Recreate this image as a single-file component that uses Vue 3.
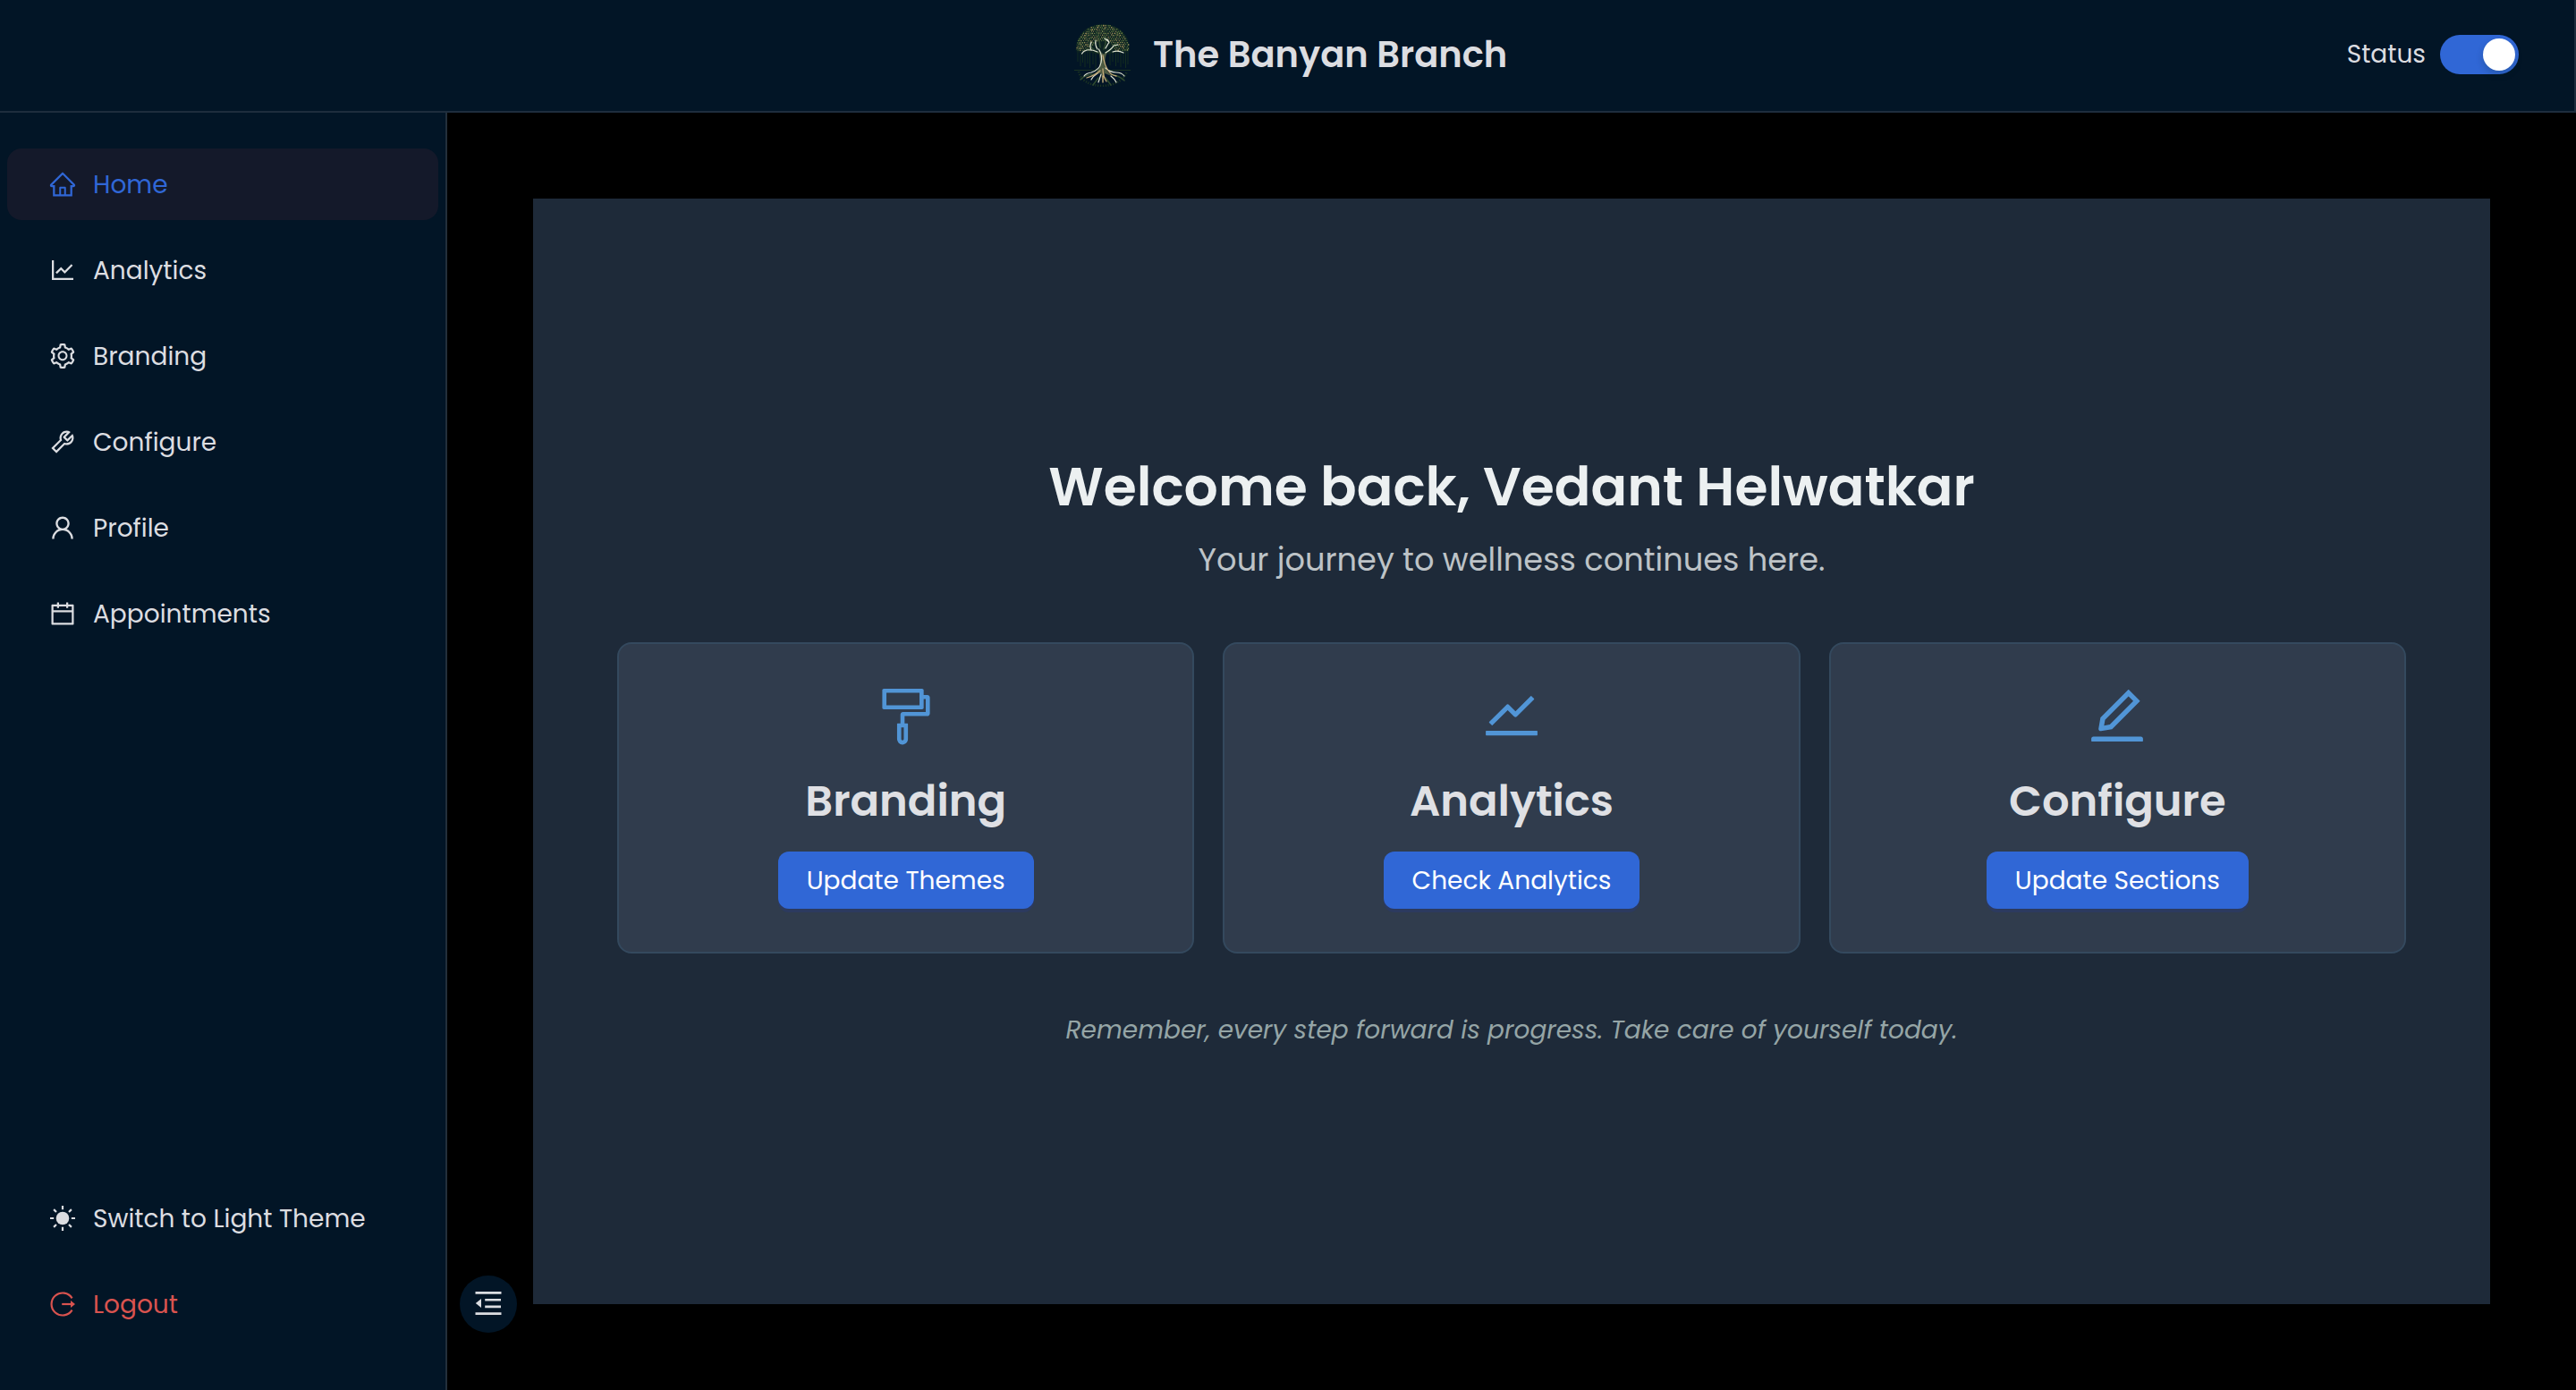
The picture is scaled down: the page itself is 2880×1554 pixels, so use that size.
<script setup>
import { ref } from 'vue'

const active = ref('Home')
const statusOn = ref(true)

const navItems = [
  {
    label: 'Home',
    path: 'M946.5 505L560.1 118.8l-25.9-25.9a31.5 31.5 0 00-44.4 0L77.5 505a63.9 63.9 0 00-18.8 46c.4 35.2 29.7 63.3 64.9 63.3h42.5V940h691.8V614.3h43.4c17.1 0 33.2-6.7 45.3-18.8a63.6 63.6 0 0018.7-45.3c0-17-6.7-33.1-18.8-45.2zM568 868H456V664h112v204zm217.9-325.7V868H632V640c0-22.1-17.9-40-40-40H432c-22.1 0-40 17.9-40 40v228H238.1V542.3h-96l370-369.7 23.1 23.1L882 542.3h-96.1z'
  },
  {
    label: 'Analytics',
    path: 'M888 792H200V168c0-4.4-3.6-8-8-8h-56c-4.4 0-8 3.6-8 8v688c0 4.4 3.6 8 8 8h752c4.4 0 8-3.6 8-8v-56c0-4.4-3.6-8-8-8zM305.8 637.7c3.1 3.1 8.1 3.1 11.3 0l138.3-137.6L583 628.5c3.1 3.1 8.2 3.1 11.3 0l275.4-275.3c3.1-3.1 3.1-8.2 0-11.3l-39.6-39.6a8.03 8.03 0 00-11.3 0l-230 229.9L461.4 404a8.03 8.03 0 00-11.3 0L266.3 586.7a8.03 8.03 0 000 11.3l39.5 39.7z'
  },
  {
    label: 'Branding',
    path: 'M924.8 625.7l-65.5-56c3.1-19 4.7-38.4 4.7-57.8s-1.6-38.8-4.7-57.8l65.5-56a32.03 32.03 0 009.3-35.2l-.9-2.6a443.74 443.74 0 00-79.7-137.9l-1.8-2.1a32.12 32.12 0 00-35.1-9.5l-81.3 28.9c-30-24.6-63.5-44-99.7-57.6l-15.7-85a32.05 32.05 0 00-25.8-25.7l-2.7-.5c-52.1-9.4-106.9-9.4-159 0l-2.7.5a32.05 32.05 0 00-25.8 25.7l-15.8 85.4a351.86 351.86 0 00-99 57.4l-81.9-29.1a32 32 0 00-35.1 9.5l-1.8 2.1a446.02 446.02 0 00-79.7 137.9l-.9 2.6c-4.5 12.5-.8 26.5 9.3 35.2l66.3 56.6c-3.1 18.8-4.6 38-4.6 57.1 0 19.2 1.5 38.4 4.6 57.1L99 625.5a32.03 32.03 0 00-9.3 35.2l.9 2.6c18.1 50.4 44.9 96.9 79.7 137.9l1.8 2.1a32.12 32.12 0 0035.1 9.5l81.9-29.1c29.8 24.5 63.1 43.9 99 57.4l15.8 85.4a32.05 32.05 0 0025.8 25.7l2.7.5a449.4 449.4 0 00159 0l2.7-.5a32.05 32.05 0 0025.8-25.7l15.7-85a350 350 0 0099.7-57.6l81.3 28.9a32 32 0 0035.1-9.5l1.8-2.1c34.8-41.1 61.6-87.5 79.7-137.9l.9-2.6c4.5-12.3.8-26.3-9.3-35zM788.3 465.9c2.5 15.1 3.8 30.6 3.8 46.1s-1.3 31-3.8 46.1l-6.6 40.1 74.7 63.9a370.03 370.03 0 01-42.6 73.6L721 702.8l-31.4 25.8c-23.9 19.6-50.5 35-79.3 45.8l-38.1 14.3-17.9 97a377.5 377.5 0 01-85 0l-17.9-97.2-37.8-14.5c-28.5-10.8-55-26.2-78.7-45.7l-31.4-25.9-93.4 33.2c-17-22.9-31.2-47.6-42.6-73.6l75.5-64.5-6.5-40c-2.4-14.9-3.7-30.3-3.7-45.5 0-15.3 1.2-30.6 3.7-45.5l6.5-40-75.5-64.5c11.3-26.1 25.6-50.7 42.6-73.6l93.4 33.2 31.4-25.9c23.7-19.5 50.2-34.9 78.7-45.7l37.9-14.3 17.9-97.2c28.1-3.2 56.8-3.2 85 0l17.9 97 38.1 14.3c28.7 10.8 55.4 26.2 79.3 45.8l31.4 25.8 92.8-32.9c17 22.9 31.2 47.6 42.6 73.6L781.8 426l6.5 39.9zM512 326c-97.2 0-176 78.8-176 176s78.8 176 176 176 176-78.8 176-176-78.8-176-176-176zm79.2 255.2A111.6 111.6 0 01512 614c-29.9 0-58-11.7-79.2-32.8A111.6 111.6 0 01400 502c0-29.9 11.7-58 32.8-79.2C454 401.6 482.1 390 512 390c29.9 0 58 11.6 79.2 32.8A111.6 111.6 0 01624 502c0 29.9-11.7 58-32.8 79.2z'
  },
  {
    label: 'Configure',
    path: 'M876.6 239.5c-.5-.9-1.2-1.8-2-2.5-5-5-13.1-5-18.1 0L684.2 409.3l-67.9-67.9L788.7 169c.8-.8 1.4-1.6 2-2.5 3.6-6.1 1.6-13.9-4.5-17.5-98.2-58-226.8-44.7-311.3 39.7-67 67-89.2 162-66.5 247.4l-293 293c-3 3-2.8 7.9.3 11l169.7 169.7c3.1 3.1 8.1 3.3 11 .3l292.9-292.9c85.5 22.8 180.5.7 247.6-66.4 84.4-84.5 97.7-213.1 39.7-311.3zM786 499.8c-58.1 58.1-145.3 69.3-214.6 33.6l-8.8 8.8-.1-.1-274 274.1-79.2-79.2 230.1-230.1s0 .1.1.1l52.8-52.8c-35.7-69.3-24.5-156.5 33.6-214.6a184.2 184.2 0 01144-53.5L537 318.9a32.05 32.05 0 000 45.3l124.5 124.5a32.05 32.05 0 0045.3 0l132.8-132.8c3.7 51.8-14.4 104.8-53.6 143.9z'
  },
  {
    label: 'Profile',
    path: 'M858.5 763.6a374 374 0 00-80.6-119.5 375.63 375.63 0 00-119.5-80.6c-.4-.2-.8-.3-1.2-.5C719.5 518 760 444.7 760 362c0-137-111-248-248-248S264 225 264 362c0 82.7 40.5 156 102.8 201.1-.4.2-.8.3-1.2.5-44.8 18.9-85 46-119.5 80.6a375.63 375.63 0 00-80.6 119.5A371.7 371.7 0 00136 901.8a8 8 0 008 8.2h60c4.4 0 7.9-3.5 8-7.8 2-77.2 33-149.5 87.8-204.3 56.7-56.7 132-87.9 212.2-87.9s155.5 31.2 212.2 87.9C779 752.7 810 825 812 902.2c.1 4.4 3.6 7.8 8 7.8h60a8 8 0 008-8.2c-1-47.8-10.9-94.3-29.5-138.2zM512 534c-45.9 0-89.1-17.9-121.6-50.4S340 407.9 340 362c0-45.9 17.9-89.1 50.4-121.6S466.1 190 512 190s89.1 17.9 121.6 50.4S684 316.1 684 362c0 45.9-17.9 89.1-50.4 121.6S557.9 534 512 534z'
  },
  {
    label: 'Appointments',
    path: 'M880 184H712v-64c0-4.4-3.6-8-8-8h-56c-4.4 0-8 3.6-8 8v64H384v-64c0-4.4-3.6-8-8-8h-56c-4.4 0-8 3.6-8 8v64H144c-17.7 0-32 14.3-32 32v664c0 17.7 14.3 32 32 32h736c17.7 0 32-14.3 32-32V216c0-17.7-14.3-32-32-32zm-40 656H184V460h656v380zM184 392V256h128v48c0 4.4 3.6 8 8 8h56c4.4 0 8-3.6 8-8v-48h256v48c0 4.4 3.6 8 8 8h56c4.4 0 8-3.6 8-8v-48h128v136H184z'
  }
]

const cards = [
  {
    title: 'Branding',
    action: 'Update Themes',
    path: 'M840 192h-56v-72c0-13.3-10.7-24-24-24H168c-13.3 0-24 10.7-24 24v272c0 13.3 10.7 24 24 24h592c13.3 0 24-10.7 24-24V256h32v200H465c-22.1 0-40 17.9-40 40v136h-44c-4.4 0-8 3.6-8 8v228c0 .6.1 1.3.2 1.9A83.99 83.99 0 00457 960c46.4 0 84-37.6 84-84 0-2.1-.1-4.1-.2-6.1.1-.6.2-1.2.2-1.9V640c0-4.4-3.6-8-8-8h-44V520h351c22.1 0 40-17.9 40-40V232c0-22.1-17.9-40-40-40zM720 352H208V160h512v192zM477 876c0 11-9 20-20 20s-20-9-20-20V696h40v180z'
  },
  {
    title: 'Analytics',
    action: 'Check Analytics',
    path: 'M904 747H120c-4.4 0-8 3.6-8 8v56c0 4.4 3.6 8 8 8h784c4.4 0 8-3.6 8-8v-56c0-4.4-3.6-8-8-8zM165.7 621.8l39.7 39.5c3.1 3.1 8.2 3.1 11.3 0l234.7-233.9 97.6 97.3a32.11 32.11 0 0045.2 0l264.2-263.2c3.1-3.1 3.1-8.2 0-11.3l-39.7-39.6a8.03 8.03 0 00-11.3 0l-235.7 235-97.7-97.3a32.11 32.11 0 00-45.2 0L165.7 610.5a7.94 7.94 0 000 11.3z'
  },
  {
    title: 'Configure',
    action: 'Update Sections',
    path: 'M257.7 752c2 0 4-.2 6-.5L431.9 722c2-.4 3.9-1.3 5.3-2.8l423.9-423.9a9.96 9.96 0 000-14.1L694.9 114.9c-1.9-1.9-4.4-2.9-7.1-2.9s-5.2 1-7.1 2.9L256.8 538.8c-1.5 1.5-2.4 3.3-2.8 5.3l-29.5 168.2a33.5 33.5 0 009.4 29.8c6.6 6.4 14.9 9.9 23.8 9.9zm67.4-174.4L687.8 215l73.3 73.3-362.7 362.6-88.9 15.7 15.6-89zM880 836H144c-17.7 0-32 14.3-32 32v36c0 4.4 3.6 8 8 8h784c4.4 0 8-3.6 8-8v-36c0-17.7-14.3-32-32-32z'
  }
]

// Leaves of the logo: jittered dots filling the upper dome of the tree.
const leafColors = ['#858f52', '#a8955c', '#6b8044', '#8d8a52', '#4f6b3c']
const leaves = []
let seed = 7
const rand = () => {
  seed = (seed * 16807) % 2147483647
  return seed / 2147483647
}
for (let row = 0; row < 14; row++) {
  for (let col = 0; col < 24; col++) {
    const x = 3.5 + col * 2.5 + (row % 2) * 1.25 + rand() * 0.7
    const y = 3.5 + row * 2.1 + rand() * 0.6
    const dx = (x - 33) / 29.5
    const dy = (y - 32) / 29.5
    const hollow = Math.hypot((x - 33) / 14, (y - 34) / 13) < 1
    if (dx * dx + dy * dy < 1 && !hollow) {
      leaves.push({ x, y, r: 0.6 + rand() * 0.3, fill: leafColors[Math.floor(rand() * 5)] })
    }
  }
}
const aerialRoots = [5, 8, 10.5, 13, 16, 18.5, 22, 25, 41, 44, 47.5, 50, 53, 56, 58.5, 61]
</script>

<template>
  <div class="app">
    <header class="header">
      <div class="brand">
        <svg class="logo" viewBox="0 0 65 72" fill="none">
          <path d="M3.5 33C3 14 16 2.5 33 2.5S63 14 62 33c-7 2-12-1-17 1-8 3-14 3-24 0-6-2-11 1-17.5-1z" fill="#0c2222" />
          <path d="M3.5 31C3.5 14 16 2.7 33 2.7S62.5 14 62 31" stroke="#1d3724" stroke-width="1.4" stroke-dasharray="1 1" />
          <g stroke="#15301f" stroke-width=".9">
            <path v-for="(x, i) in aerialRoots" :key="x" :d="`M${x} 33V${44 + (i * 5) % 9}`" />
          </g>
          <path d="M1 53.5H64" stroke="#1b3322" stroke-width="1" />
          <path d="M6 55Q10 70 32 71Q54 70 60 55" stroke="#1b3322" stroke-width="2.6" stroke-dasharray="1.2 1.6" />
          <circle v-for="(leaf, i) in leaves" :key="i" :cx="leaf.x" :cy="leaf.y" :r="leaf.r" :fill="leaf.fill" />
          <g stroke="#2f4a30" stroke-width="1.6" stroke-linecap="round">
            <path d="M28 34Q21 31 18 24M36 34Q44 30 48 23M30 28L28 13M34 30Q38 22 35 15M22 58Q12 59 8 64M42 58Q52 60 57 65M28 62L22 70M36 62L42 70" />
          </g>
          <path d="M28 31Q31 42 29 50Q27 56 22 58L31 57L33 68L35 57L43 60Q36 54 35.5 47Q35 39 38 33Q34 37 32 34Z" fill="#4d5a42" />
          <g stroke-linecap="round" stroke-linejoin="round">
            <g stroke="#dfe3d2" stroke-width="1.2">
              <path d="M28.5 30Q33 37 31 45Q29.5 53 20 56Q14 57 12 60" />
              <path d="M27 33Q20 30 15 31Q11 32 9.5 35" />
              <path d="M20 31Q18 27 20 22M27 30Q24 25 25 20" />
              <path d="M36 34Q43 30 45 26L50 25" />
              <path d="M36 29L40 22L38 19M40 22L35 18" />
              <path d="M44 33Q50 31 56 34" />
              <path d="M36 51Q41 56 48 56Q54 56 57 60" />
              <path d="M27 57Q22 60 20 64M42 60Q46 63 48 67M31 58L28 67" />
            </g>
            <g stroke="#c2a878" stroke-width="1.3">
              <path d="M33 37Q35 48 39 54Q42 59 48 60" />
              <path d="M33 52Q33 60 37 66M30 54Q25 59 15 62M33 60L33 67" />
            </g>
          </g>
        </svg>
        <span class="brand-name">The Banyan Branch</span>
      </div>
      <div class="status">
        <span>Status</span>
        <button class="switch" :class="{ on: statusOn }" @click="statusOn = !statusOn">
          <span class="knob"></span>
        </button>
      </div>
    </header>

    <div class="body">
      <aside class="sidebar">
        <nav class="menu">
          <a
            v-for="item in navItems"
            :key="item.label"
            class="menu-item"
            :class="{ active: active === item.label }"
            @click="active = item.label"
          >
            <svg class="menu-icon" viewBox="0 0 1024 1024" fill="currentColor"><path :d="item.path" /></svg>
            <span class="menu-label">{{ item.label }}</span>
          </a>
        </nav>
        <div class="menu">
          <a class="menu-item">
            <svg class="menu-icon" viewBox="0 0 32 32" stroke="currentColor" stroke-width="2.2">
              <circle cx="16" cy="16" r="7.3" fill="currentColor" stroke="none" />
              <path d="M16 2v4.2M16 25.8V30M2 16h4.2M25.8 16H30M6.1 6.1l2.9 2.9M23 23l2.9 2.9M6.1 25.9L9 23M23 9l2.9-2.9" />
            </svg>
            <span class="menu-label">Switch to Light Theme</span>
          </a>
          <a class="menu-item danger">
            <svg class="menu-icon" viewBox="0 0 32 32" fill="none" stroke="currentColor" stroke-width="2.2">
              <path d="M26.6 9.3A12.5 12.5 0 1 0 26.6 22.7" />
              <path d="M15.2 16H26" />
              <path d="M25 11.9L30 16l-5 4.1z" fill="currentColor" stroke="none" />
            </svg>
            <span class="menu-label">Logout</span>
          </a>
        </div>
      </aside>

      <main class="content">
        <button class="collapse">
          <svg viewBox="0 0 32 32" fill="currentColor">
            <path d="M1.5 2h29v2.8h-29zM12.2 10H30v2.6H12.2zM12.2 17.6H30v2.6H12.2zM1.5 25.2h29V28h-29zM1.8 15.1l6.2-5v10z" />
          </svg>
        </button>
        <section class="welcome">
          <h1>Welcome back, Vedant Helwatkar</h1>
          <p class="subtitle">Your journey to wellness continues here.</p>
          <div class="cards">
            <article v-for="card in cards" :key="card.title" class="card">
              <svg class="card-icon" viewBox="0 0 1024 1024" fill="currentColor"><path :d="card.path" /></svg>
              <h2>{{ card.title }}</h2>
              <button class="action">{{ card.action }}</button>
            </article>
          </div>
          <p class="note">Remember, every step forward is progress. Take care of yourself today.</p>
        </section>
      </main>
    </div>
  </div>
</template>

<style>
body {
  background: #000;
}
</style>

<style scoped>
.app {
  display: flex;
  flex-direction: column;
  height: 1554px;
  background: #000;
  color: #dcdde1;
  font-family: Poppins, Inter, sans-serif;
  font-size: 28px;
}

.app * {
  box-sizing: border-box;
}

button {
  border: 0;
  padding: 0;
  font: inherit;
  color: inherit;
}

.header {
  display: grid;
  grid-template-columns: 1fr auto 1fr;
  align-items: center;
  height: 126px;
  padding-bottom: 2px;
  background: #021526;
  border-right: 2px solid #1e2d3d;
  border-bottom: 2px solid #1e2d3d;
}

.brand {
  grid-column: 2;
  display: flex;
  align-items: center;
  gap: 24px;
  width: 490px;
  padding-left: 6px;
}

.logo {
  flex: none;
  width: 65px;
  height: 72px;
}

.brand-name {
  font-size: 40px;
  font-weight: 600;
  white-space: nowrap;
}

.status {
  display: flex;
  justify-content: flex-end;
  align-items: center;
  gap: 16px;
  padding-right: 62px;
}

.switch {
  display: flex;
  width: 88px;
  height: 44px;
  padding: 4px;
  border-radius: 22px;
  background: #57606f;
}

.switch.on {
  justify-content: flex-end;
  background: #3067d6;
}

.knob {
  width: 36px;
  height: 36px;
  border-radius: 50%;
  background: #fff;
  box-shadow: 0 4px 8px rgba(0, 35, 11, 0.2);
}

.body {
  display: flex;
  flex: 1;
  min-height: 0;
}

.sidebar {
  display: flex;
  flex-direction: column;
  justify-content: space-between;
  width: 500px;
  padding: 40px 8px 56px;
  background: #021526;
  border-right: 2px solid #232f3b;
}

.menu {
  display: flex;
  flex-direction: column;
  gap: 16px;
}

.menu-item {
  display: flex;
  align-items: center;
  gap: 18px;
  height: 80px;
  padding-left: 46px;
  border-radius: 16px;
  white-space: nowrap;
}

.menu-item.active {
  background: #14192a;
  color: #3067d6;
}

.menu-item.danger {
  color: #d9534f;
}

.menu-icon {
  width: 32px;
  height: 32px;
}

.menu-label {
  padding-top: 2px;
}

.content {
  position: relative;
  flex: 1;
  padding: 96px;
}

.collapse {
  position: absolute;
  left: 14px;
  bottom: 64px;
  display: flex;
  align-items: center;
  justify-content: center;
  width: 64px;
  height: 64px;
  border-radius: 50%;
  background: #021526;
}

.collapse svg {
  width: 32px;
  height: 32px;
}

.welcome {
  display: flex;
  flex-direction: column;
  align-items: center;
  height: 1236px;
  padding-top: 286px;
  background: #1e2a39;
}

h1 {
  margin: 0 0 18px;
  color: #ecf0f1;
  font-size: 60px;
  font-weight: 600;
  line-height: 72px;
}

.subtitle {
  margin: 0 0 64px;
  color: #bdc3c7;
  font-size: 35.2px;
  line-height: 56px;
}

.cards {
  display: grid;
  grid-template-columns: repeat(3, 1fr);
  gap: 32px;
  width: 2000px;
}

.card {
  display: flex;
  flex-direction: column;
  align-items: center;
  height: 348px;
  padding-top: 43px;
  border: 2px solid #34495e;
  border-radius: 16px;
  background: #303c4d;
}

.card-icon {
  width: 74px;
  height: 74px;
  color: #5195d6;
}

h2 {
  margin: 27px 0 24px;
  color: #dfe0e4;
  font-size: 48px;
  font-weight: 600;
  line-height: 64px;
}

.action {
  height: 64px;
  padding: 2px 32px 0;
  border-radius: 12px;
  background: #3067d6;
  box-shadow: 0 4px 0 rgba(38, 55, 140, 0.3);
  color: #fff;
}

.note {
  margin: 64px 0 0;
  color: #95a5a6;
  font-size: 28px;
  font-style: italic;
  line-height: 44px;
}
</style>
